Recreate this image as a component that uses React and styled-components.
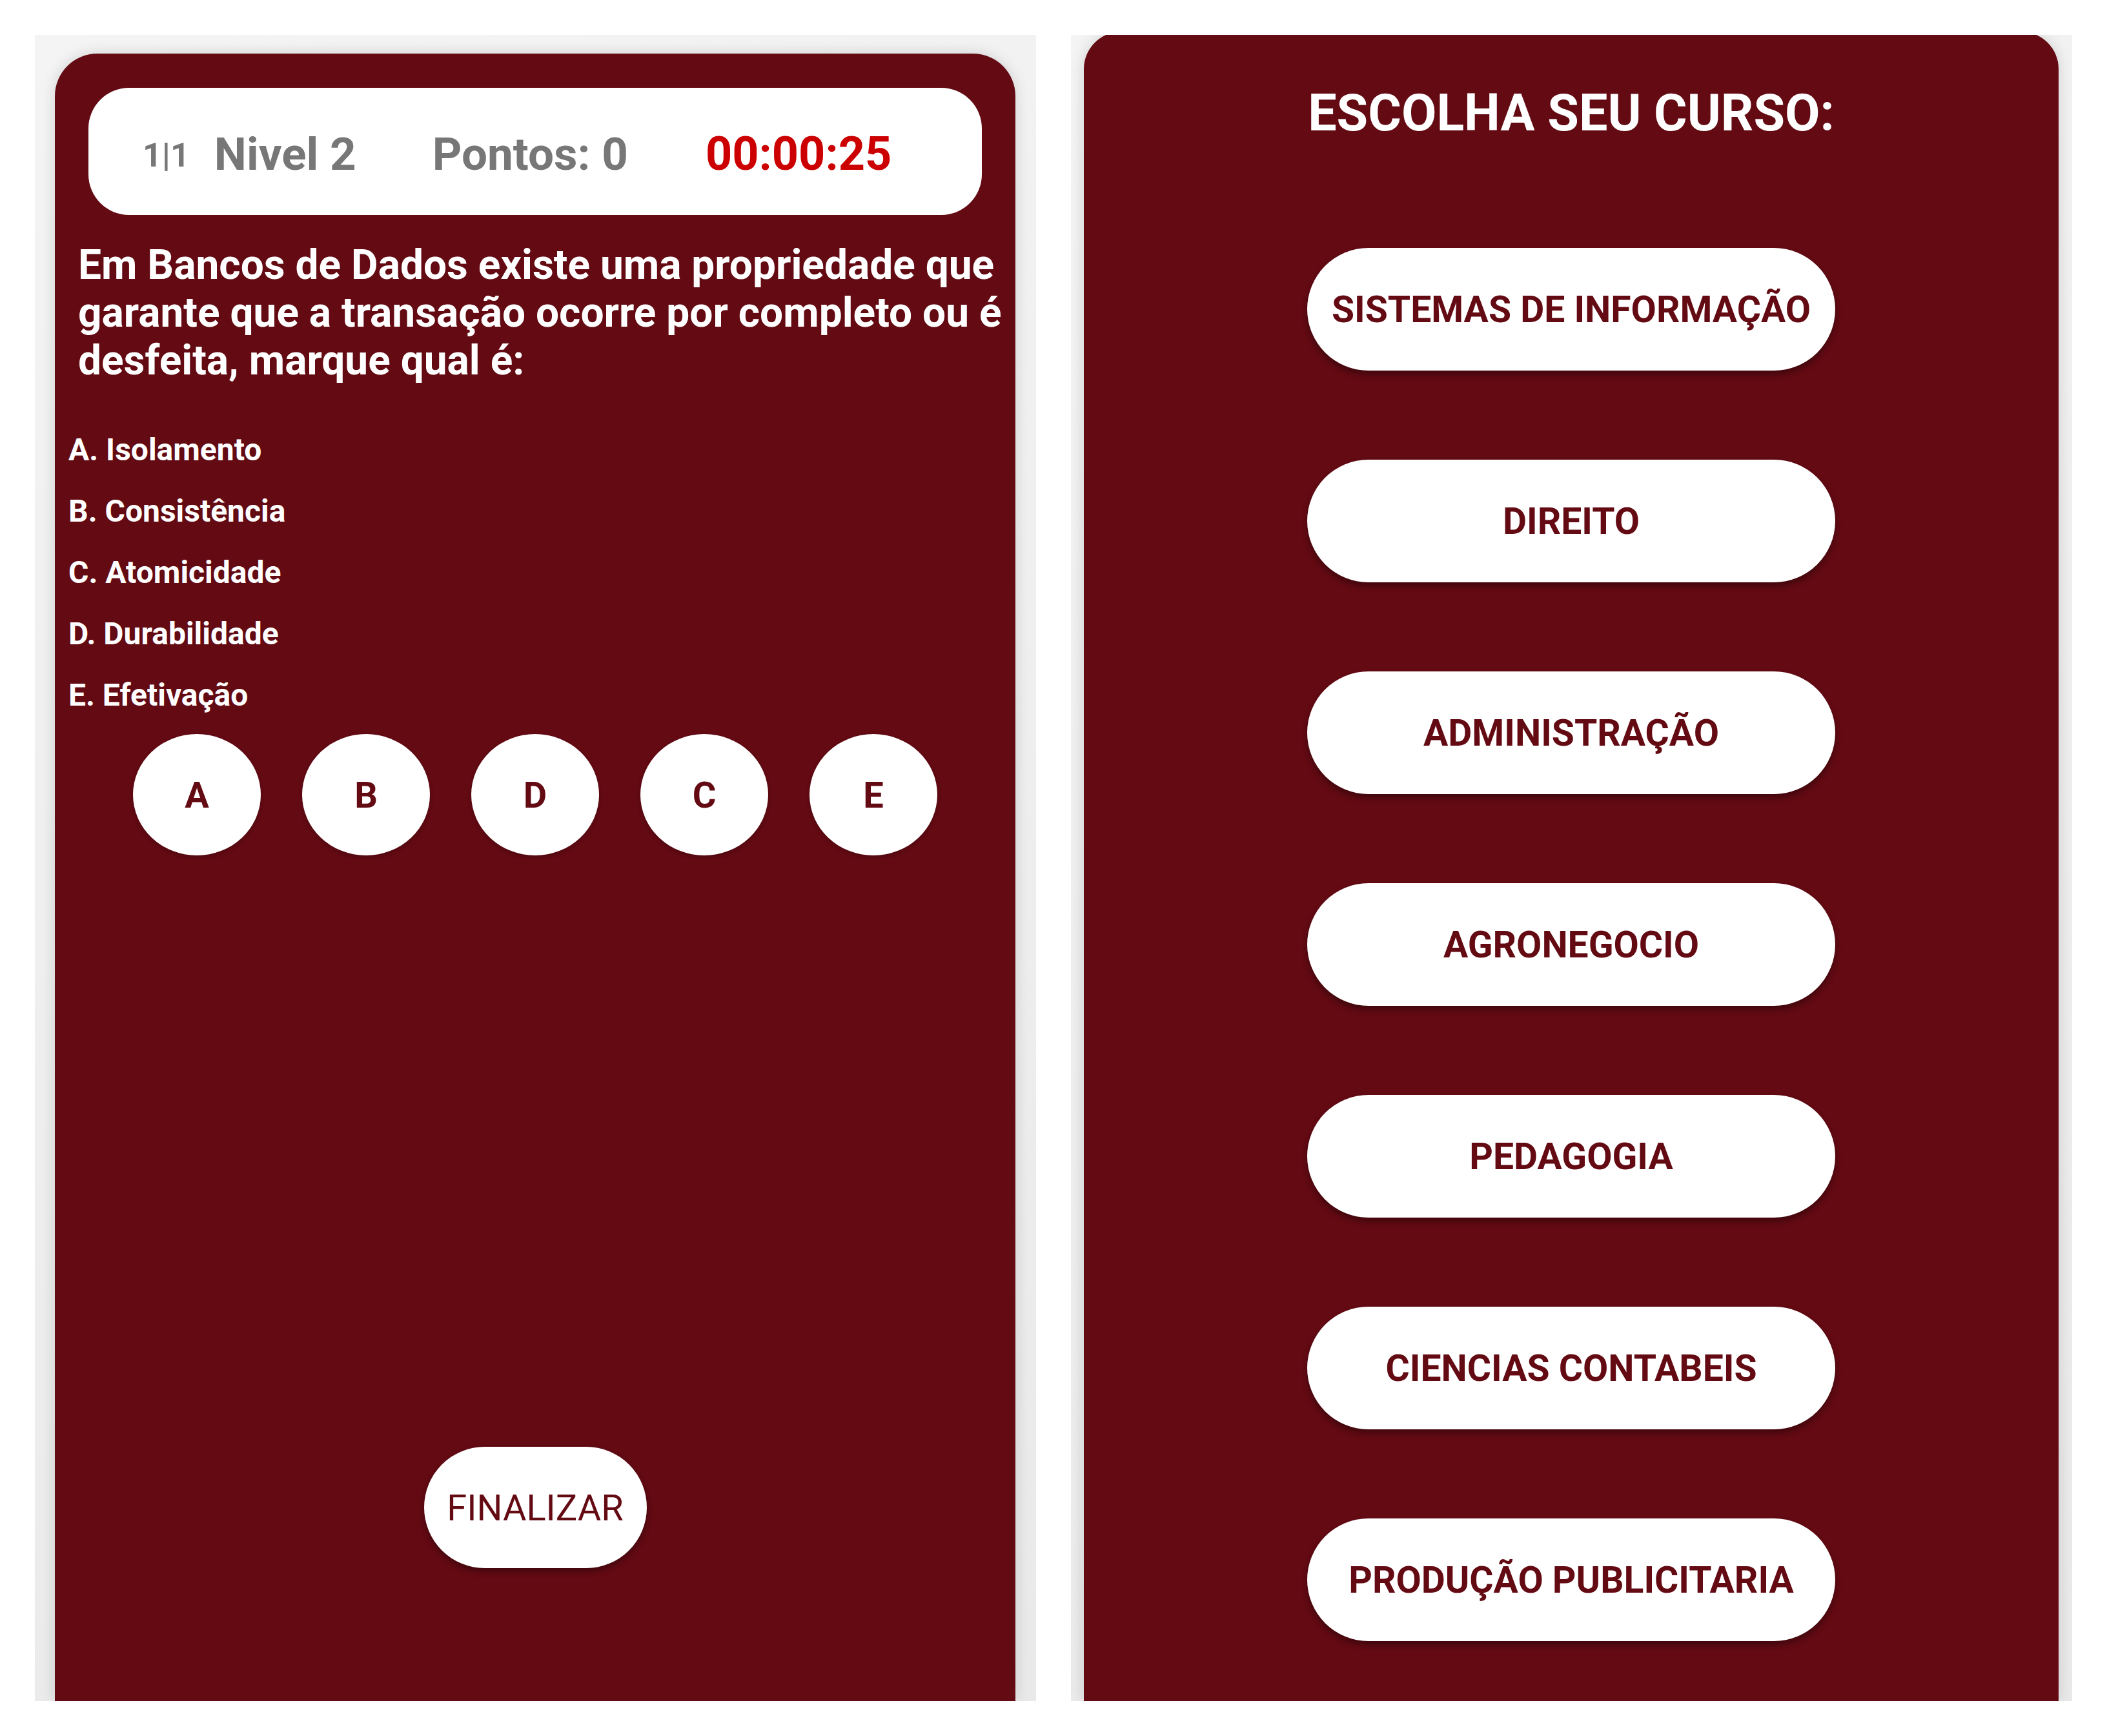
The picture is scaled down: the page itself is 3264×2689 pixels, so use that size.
import React from "react";
import styled, { createGlobalStyle } from "styled-components";

const WINE = "#630a13";

const GlobalStyle = createGlobalStyle`
  html, body {
    margin: 0;
    padding: 0;
    background: #ffffff;
    font-family: Roboto, "Liberation Sans", Arial, sans-serif;
  }
`;

const options = [
  "A. Isolamento",
  "B. Consistência",
  "C. Atomicidade",
  "D. Durabilidade",
  "E. Efetivação",
];

const answers = ["A", "B", "D", "C", "E"];

const cursos = [
  "SISTEMAS DE INFORMAÇÃO",
  "DIREITO",
  "ADMINISTRAÇÃO",
  "AGRONEGOCIO",
  "PEDAGOGIA",
  "CIENCIAS CONTABEIS",
  "PRODUÇÃO PUBLICITARIA",
];

function QuizScreen() {
  return (
    <Frame $pad="29px 32px 0 31px">
      <QuizCard>
        <StatusBar>
          <Counter>1|1</Counter>
          <Status>Nivel 2</Status>
          <Status $gap="118px">Pontos: 0</Status>
          <Timer>00:00:25</Timer>
        </StatusBar>
        <Question>
          Em Bancos de Dados existe uma propriedade que garante que a transação
          ocorre por completo ou é desfeita, marque qual é:
        </Question>
        <OptionList>
          {options.map((o) => (
            <Option key={o}>{o}</Option>
          ))}
        </OptionList>
        <AnswerRow>
          {answers.map((a) => (
            <AnswerButton key={a}>{a}</AnswerButton>
          ))}
        </AnswerRow>
        <FinishButton>FINALIZAR</FinishButton>
      </QuizCard>
    </Frame>
  );
}

function CourseScreen() {
  return (
    <Frame $pad="0 21px 0 20px">
      <CourseCard>
        <Title>ESCOLHA SEU CURSO:</Title>
        <CourseList>
          {cursos.map((c) => (
            <CourseButton key={c}>{c}</CourseButton>
          ))}
        </CourseList>
      </CourseCard>
    </Frame>
  );
}

export default function App() {
  return (
    <>
      <GlobalStyle />
      <Page>
        <QuizScreen />
        <CourseScreen />
      </Page>
    </>
  );
}

const Page = styled.div`
  display: flex;
  gap: 54px;
  padding: 54px 54px 0 54px;
  height: 2635px;
  box-sizing: border-box;
`;

const Frame = styled.div`
  width: 1551px;
  height: 100%;
  box-sizing: border-box;
  padding: ${(p) => p.$pad};
  background: linear-gradient(160deg, #f4f4f4, #e9e9e9);
  overflow: hidden;
  display: flex;
  flex-direction: column;
`;

const Card = styled.div`
  flex: 1 0 auto;
  background: ${WINE};
  display: flex;
  flex-direction: column;
  box-shadow: 0 0 22px rgba(0, 0, 0, 0.14);
`;

const QuizCard = styled(Card)`
  border-radius: 66px 66px 0 0;
`;

const CourseCard = styled(Card)`
  margin-top: -5px;
  border-radius: 58px 58px 0 0;
  align-items: center;
`;

const StatusBar = styled.div`
  margin: 53px 52px 0;
  height: 197px;
  box-sizing: border-box;
  padding: 8px 0 0 84px;
  border-radius: 63px;
  background: #ffffff;
  display: flex;
  align-items: center;
  color: #777777;
  font-weight: 700;
`;

const Counter = styled.span`
  font-size: 52px;
  margin-right: 38px;
  position: relative;
  top: 2px;
`;

const Status = styled.span`
  font-size: 71px;
  margin-left: ${(p) => p.$gap || "0"};
`;

const Timer = styled.span`
  font-size: 72px;
  margin-left: 120px;
  color: #cc0000;
`;

const Question = styled.p`
  margin: 41px 0 0 36px;
  padding-right: 8px;
  color: #ffffff;
  font-size: 64px;
  line-height: 74px;
  font-weight: 700;
`;

const OptionList = styled.div`
  margin: 53px 0 0 21px;
  display: flex;
  flex-direction: column;
`;

const Option = styled.div`
  color: #ffffff;
  font-size: 48px;
  line-height: 95px;
  font-weight: 700;
`;

const AnswerRow = styled.div`
  margin-top: 13px;
  display: flex;
  justify-content: center;
  gap: 64px;
`;

const AnswerButton = styled.button`
  width: 198px;
  height: 188px;
  border: none;
  border-radius: 50%;
  background: #ffffff;
  color: ${WINE};
  font-family: inherit;
  font-size: 56px;
  font-weight: 700;
  padding: 2px 0 0;
  box-shadow: 0 3px 6px rgba(0, 0, 0, 0.2);
`;

const FinishButton = styled.button`
  align-self: center;
  margin-top: 916px;
  width: 345px;
  height: 188px;
  border: none;
  border-radius: 94px;
  background: #ffffff;
  color: ${WINE};
  font-family: inherit;
  font-size: 56px;
  font-weight: 400;
  padding: 2px 0 0;
  box-shadow: 0 5px 10px rgba(0, 0, 0, 0.35);
`;

const Title = styled.h1`
  margin: 81px 0 0;
  color: #ffffff;
  font-size: 79px;
  line-height: 90px;
  font-weight: 700;
`;

const CourseList = styled.div`
  margin-top: 164px;
  display: flex;
  flex-direction: column;
  gap: 138px;
`;

const CourseButton = styled.button`
  width: 818px;
  height: 190px;
  border: none;
  border-radius: 95px;
  background: #ffffff;
  color: ${WINE};
  font-family: inherit;
  font-size: 57px;
  font-weight: 700;
  padding: 0;
  box-shadow: 0 6px 10px rgba(0, 0, 0, 0.35);
`;
